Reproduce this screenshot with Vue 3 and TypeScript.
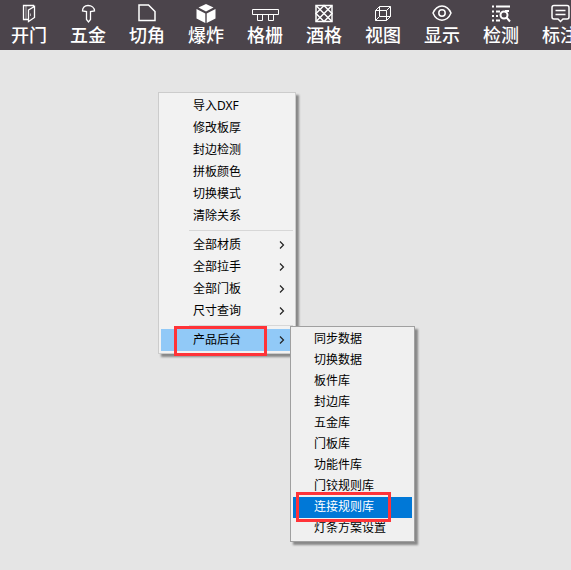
<script setup lang="ts">
import { ref } from 'vue'

interface Tool {
  id: string
  label: string
}

interface MenuItem {
  label: string
  sub?: boolean
}

const tools: Tool[] = [
  { id: 'door', label: '开门' },
  { id: 'hardware', label: '五金' },
  { id: 'corner', label: '切角' },
  { id: 'explode', label: '爆炸' },
  { id: 'grille', label: '格栅' },
  { id: 'wine', label: '酒格' },
  { id: 'view', label: '视图' },
  { id: 'show', label: '显示' },
  { id: 'detect', label: '检测' },
  { id: 'note', label: '标注' },
]

const groups: MenuItem[][] = [
  ['导入DXF', '修改板厚', '封边检测', '拼板颜色', '切换模式', '清除关系'].map((label) => ({ label })),
  ['全部材质', '全部拉手', '全部门板', '尺寸查询'].map((label) => ({ label, sub: true })),
  [{ label: '产品后台', sub: true }],
]

const library: string[] = [
  '同步数据',
  '切换数据',
  '板件库',
  '封边库',
  '五金库',
  '门板库',
  '功能件库',
  '门铰规则库',
  '连接规则库',
  '灯条方案设置',
]

const opened = ref('产品后台')
const selected = ref('连接规则库')
</script>

<template>
  <div class="app">
    <nav class="toolbar">
      <button v-for="tool in tools" :key="tool.id" type="button" class="tool">
        <svg class="icon" viewBox="0 0 28 20" aria-hidden="true">
          <g v-if="tool.id === 'door'" class="light">
            <path d="M13 15.500H8.500V1.500H18.500V3" />
            <path d="M13.500 6L19.500 2.500V13.500L13.500 17.500Z" />
            <path d="M11 2V15M15.500 9.500V12" class="faint" />
          </g>
          <g v-else-if="tool.id === 'hardware'" class="light">
            <path d="M8.500 7C8.500 3.500 10.500 1.500 14 1.500S20.500 3.500 20.500 7L16.500 7.500V15.500L14.500 18L12.500 15.500V7.500Z" />
          </g>
          <path v-else-if="tool.id === 'corner'" d="M6 1H15.500L22 7.500V16.500H6Z" />
          <g v-else-if="tool.id === 'explode'" class="solid">
            <path d="M14 0L21.500 3.500L14 7.500L6.500 3.500Z" />
            <path d="M4.500 5L13.300 9.500V19L4.500 14.500Z" />
            <path d="M23.500 5L14.700 9.500V19L23.500 14.500Z" />
          </g>
          <g v-else-if="tool.id === 'grille'" class="thin">
            <path d="M1.500 5.500H27.500V10.500H1.500Z" />
            <path d="M6.500 10.500V16.500H11.500V10.500M17.500 10.500V16.500H22.500V10.500" />
          </g>
          <g v-else-if="tool.id === 'wine'">
            <path d="M6 1.500H22V17.500H6Z" />
            <path d="M6 1.500L22 17.500M22 1.500L6 17.500M14 1.500L22 9.500L14 17.500L6 9.500Z" />
          </g>
          <g v-else-if="tool.id === 'view'" class="thin">
            <path d="M6.500 6.500L10.500 2.500H21.500V12.500L17.500 16.500H6.500ZM6.500 6.500H17.500V16.500M17.500 6.500L21.500 2.500M10.500 2.500V12.500H21.500M10.500 12.500L6.500 16.500" />
          </g>
          <g v-else-if="tool.id === 'show'">
            <path d="M5 9C9 -0.500 19 -0.500 23 9C19 18.500 9 18.500 5 9Z" />
            <circle cx="14" cy="9" r="3.200" />
          </g>
          <g v-else-if="tool.id === 'detect'" class="bold">
            <path d="M5 2.500H7M9 2.500H23M5 7.500H7M9 7.500H13M5 12H7M9 12H11M5 16.500H7M9 16.500H13" />
            <circle cx="17" cy="11" r="3.500" />
            <path d="M19.500 13.500L23 17.500M18 7H22" />
          </g>
          <g v-else>
            <path d="M8 1.500H21Q23 1.500 23 3.500V13Q23 15 21 15H17L14.500 17.500L12 15H8Q6 15 6 13V3.500Q6 1.500 8 1.500Z" />
            <path d="M9.500 6.500H19.500M9.500 10.500H19.500" />
          </g>
        </svg>
        <span>{{ tool.label }}</span>
      </button>
    </nav>

    <main class="canvas">
      <div class="menu" role="menu">
        <div v-for="(group, index) in groups" :key="index" class="group">
          <div v-for="item in group" :key="item.label" class="entry">
            <button
              type="button"
              role="menuitem"
              class="item"
              :class="{ open: item.label === opened }"
            >
              <span>{{ item.label }}</span>
              <svg v-if="item.sub" class="arrow" viewBox="0 0 6 8" aria-hidden="true">
                <path d="M1 0.500L4.500 4L1 7.500" />
              </svg>
            </button>
            <template v-if="item.label === opened">
              <div class="submenu" role="menu">
                <button
                  v-for="name in library"
                  :key="name"
                  type="button"
                  role="menuitem"
                  class="subitem"
                  :class="{ selected: name === selected }"
                  @click="selected = name"
                >
                  {{ name }}
                  <i v-if="name === selected" class="mark mark-sub"></i>
                </button>
              </div>
              <i class="mark mark-main"></i>
            </template>
          </div>
        </div>
      </div>
    </main>
  </div>
</template>

<style>
body {
  margin: 0;
  overflow: hidden;
}
</style>

<style scoped>
.app {
  display: flex;
  flex-direction: column;
  min-height: 100vh;
  background: #e5e5e5;
  font-family: "Noto Sans", "Noto Sans CJK SC", sans-serif;
}

button {
  margin: 0;
  border: 0;
  background: none;
  font: inherit;
  color: inherit;
}

.toolbar {
  display: flex;
  gap: 1px;
  height: 50px;
  overflow: hidden;
  background: #4b444b;
}

.tool {
  display: flex;
  flex: 0 0 58px;
  flex-direction: column;
  align-items: center;
  padding: 4px 0 0;
  font-family: "Noto Sans CJK SC", sans-serif;
  font-size: 18px;
  line-height: 20px;
  font-weight: 500;
  color: #fff;
}

.icon {
  flex: none;
  width: 28px;
  height: 20px;
  fill: none;
  stroke: #fff;
  stroke-width: 1.5;
}

.icon .thin {
  stroke-width: 1;
}

.icon .light {
  stroke-width: 1.3;
}

.icon .faint {
  stroke-width: 1;
  opacity: 0.6;
}

.icon .bold {
  stroke-width: 2;
}

.icon .solid {
  fill: #fff;
  stroke: none;
}

.canvas {
  flex: 1;
  padding: 42px 0 0 158px;
}

.menu {
  box-sizing: border-box;
  width: 138px;
  padding: 2px;
  border: 1px solid #ccc;
  background: #f2f2f2;
  box-shadow: 3px 3px 2px #888;
  font-size: 12px;
  color: #000;
}

.group + .group::before {
  content: "";
  display: block;
  height: 1px;
  margin: 3px 0 3px 28px;
  background: #d7d7d7;
}

.entry {
  position: relative;
}

.item {
  display: flex;
  align-items: center;
  justify-content: space-between;
  width: 100%;
  height: 22px;
  padding: 0 8px 0 32px;
  line-height: 22px;
}

.item.open {
  background: #91c9f7;
}

.arrow {
  width: 6px;
  height: 8px;
  fill: none;
  stroke: #222;
  stroke-width: 1.2;
}

.submenu {
  position: absolute;
  top: -3px;
  left: 129px;
  z-index: 1;
  box-sizing: border-box;
  width: 125px;
  padding: 2px;
  border: 1px solid #a0a0a0;
  background: #f0f0f0;
  box-shadow: 3px 3px 2px #888;
}

.subitem {
  position: relative;
  display: block;
  width: 100%;
  height: 21px;
  padding: 0 0 2px 21px;
  line-height: 19px;
  text-align: left;
}

.subitem.selected {
  background: #0078d7;
  color: #fff;
}

.mark {
  position: absolute;
  z-index: 2;
  box-sizing: border-box;
  border: 3px solid #ff3338;
  pointer-events: none;
}

.mark-main {
  top: -3px;
  left: 13px;
  width: 93px;
  height: 30px;
}

.mark-sub {
  top: -5px;
  left: 3px;
  width: 95px;
  height: 30px;
}
</style>
